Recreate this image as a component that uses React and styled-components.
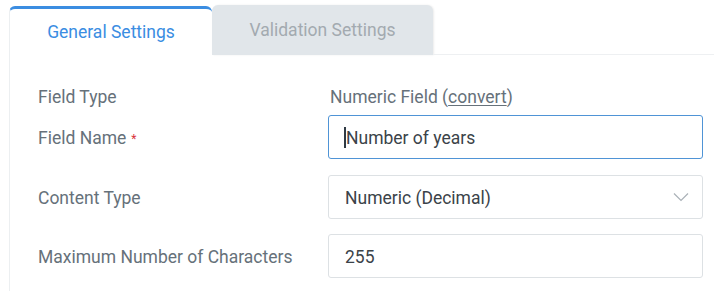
import React from "react";
import styled, { createGlobalStyle } from "styled-components";

const Global = createGlobalStyle`
  html, body { margin: 0; padding: 0; background: #fff; }
  body { font-family: Roboto, "Noto Sans", Arial, sans-serif; }
  * { box-sizing: border-box; }
`;

const Page = styled.div`
  width: 714px;
  height: 291px;
  padding: 5px 0 0 9px;
  overflow: hidden;
`;

const TabBar = styled.div`
  display: flex;
  align-items: flex-end;
  height: 50px;
`;

const Tab = styled.div`
  height: ${(p) => (p.$active ? "49px" : "50px")};
  width: ${(p) => p.$width}px;
  display: flex;
  align-items: center;
  justify-content: center;
  font-size: 17.5px;
  padding-bottom: ${(p) => (p.$active ? "1px" : "0")};
  color: ${(p) => (p.$active ? "#3a8de2" : "#a3aab0")};
  background: ${(p) => (p.$active ? "#fff" : "#e1e6ea")};
  border-top: ${(p) => (p.$active ? "3px solid #3b8de1" : "none")};
  border-left: ${(p) => (p.$active ? "1px solid #eceff1" : "none")};
  border-radius: 6px 6px 0 0;
  box-shadow: ${(p) => (p.$active ? "none" : "1px 0 2px rgba(0,0,0,0.08)")};
`;

const TabLine = styled.div`
  flex: 1;
  align-self: flex-end;
  border-bottom: 1px solid #eef0f2;
`;

const Panel = styled.div`
  border-left: 1px solid #eceff1;
  height: 240px;
  padding: 29px 11px 0 28px;
  display: flex;
  flex-direction: column;
`;

const Row = styled.div`
  display: grid;
  grid-template-columns: 290px 1fr;
  align-items: center;
  height: ${(p) => p.$h}px;
  margin-bottom: ${(p) => p.$mb}px;
`;

const Label = styled.div`
  font-size: 17.5px;
  color: #66717a;
  padding-top: 2px;
`;

const Required = styled.span`
  color: #d8323c;
  font-size: 12px;
  margin-left: 5px;
  position: relative;
  top: -1px;
`;

const Value = styled.div`
  font-size: 17.5px;
  color: #66717a;
  padding-left: 2px;
  padding-top: 1px;
`;

const Link = styled.span`
  text-decoration: underline;
  text-underline-offset: 2px;
`;

const Box = styled.div`
  height: 44px;
  border: 1px solid ${(p) => (p.$focus ? "#4f94d6" : "#dde1e4")};
  border-radius: 3px;
  display: flex;
  align-items: center;
  padding: 1px 16px 0 16px;
  font-size: 17.5px;
  color: #3b4349;
  background: #fff;
  position: relative;
`;

const Caret = styled.span`
  display: inline-block;
  width: 2px;
  height: 21px;
  background: #2f3a44;
  margin-right: -1px;
  position: relative;
  left: -1px;
`;

const Chevron = styled.svg`
  position: absolute;
  right: 13px;
  top: 50%;
  transform: translateY(-50%);
`;

export default function App() {
  return (
    <>
      <Global />
      <Page>
        <TabBar>
          <Tab $active $width={203}>General Settings</Tab>
          <Tab $width={221}>Validation Settings</Tab>
          <TabLine />
        </TabBar>
        <Panel>
          <Row $h={24} $mb={7}>
            <Label>Field Type</Label>
            <Value>
              Numeric Field (<Link>convert</Link>)
            </Value>
          </Row>
          <Row $h={44} $mb={16}>
            <Label>
              Field Name<Required>*</Required>
            </Label>
            <Box $focus>
              <Caret />
              Number of years
            </Box>
          </Row>
          <Row $h={44} $mb={15}>
            <Label>Content Type</Label>
            <Box>
              Numeric (Decimal)
              <Chevron width="16" height="10" viewBox="0 0 16 10">
                <path d="M1 1.5 L8 8.5 L15 1.5" fill="none" stroke="#aab1b7" strokeWidth="1.2" />
              </Chevron>
            </Box>
          </Row>
          <Row $h={44} $mb={0}>
            <Label>Maximum Number of Characters</Label>
            <Box>255</Box>
          </Row>
        </Panel>
      </Page>
    </>
  );
}
